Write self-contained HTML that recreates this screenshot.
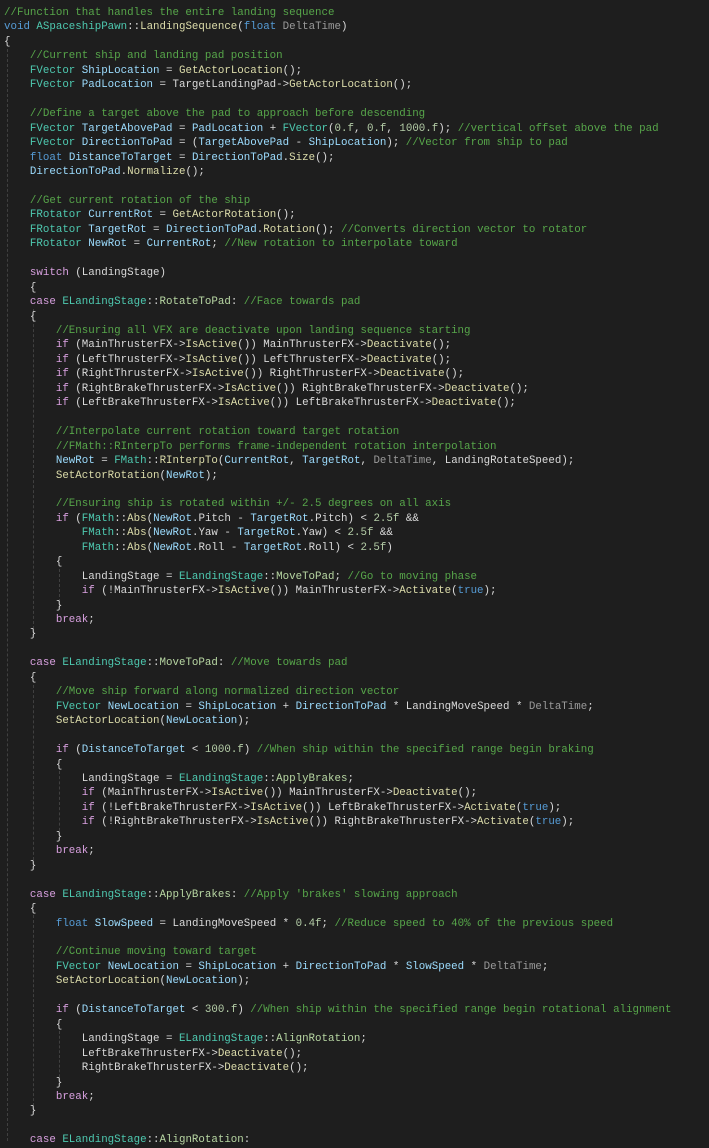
<!DOCTYPE html>
<html><head><meta charset="utf-8"><style>
html,body{margin:0;padding:0;background:#1e1e1e;width:709px;height:1147px;overflow:hidden}
pre{position:absolute;left:4px;top:6px;margin:0;font-family:"Liberation Mono",monospace;font-size:10.8px;line-height:14.45px;color:#dadada;white-space:pre}
.c{color:#57a64a}.k{color:#569cd6}.p{color:#d8a0df}.t{color:#4ec9b0}.f{color:#dcdcaa}.v{color:#9cdcfe}.n{color:#b5cea8}.e{color:#b8d7a3}.g{color:#9a9a9a}.o{color:#b4b4b4}
.guide{position:absolute;width:0;border-left:1px dashed #404040}
</style></head><body>
<div class="guide" style="left:7px;top:49px;height:1092px"></div>
<div class="guide" style="left:33px;top:309px;height:325px"></div>
<div class="guide" style="left:59px;top:569px;height:38px"></div>
<div class="guide" style="left:33px;top:685px;height:180px"></div>
<div class="guide" style="left:59px;top:771px;height:65px"></div>
<div class="guide" style="left:33px;top:915px;height:196px"></div>
<div class="guide" style="left:59px;top:1031px;height:51px"></div>
<pre><span class="c">//Function that handles the entire landing sequence</span>
<span class="k">void</span> <span class="t">ASpaceshipPawn</span>::<span class="f">LandingSequence</span>(<span class="k">float</span> <span class="g">DeltaTime</span>)
{
    <span class="c">//Current ship and landing pad position</span>
    <span class="t">FVector</span> <span class="v">ShipLocation</span> = <span class="f">GetActorLocation</span>();
    <span class="t">FVector</span> <span class="v">PadLocation</span> = TargetLandingPad-&gt;<span class="f">GetActorLocation</span>();

    <span class="c">//Define a target above the pad to approach before descending</span>
    <span class="t">FVector</span> <span class="v">TargetAbovePad</span> = <span class="v">PadLocation</span> + <span class="t">FVector</span>(<span class="n">0.f</span>, <span class="n">0.f</span>, <span class="n">1000.f</span>); <span class="c">//vertical offset above the pad</span>
    <span class="t">FVector</span> <span class="v">DirectionToPad</span> = (<span class="v">TargetAbovePad</span> - <span class="v">ShipLocation</span>); <span class="c">//Vector from ship to pad</span>
    <span class="k">float</span> <span class="v">DistanceToTarget</span> = <span class="v">DirectionToPad</span>.<span class="f">Size</span>();
    <span class="v">DirectionToPad</span>.<span class="f">Normalize</span>();

    <span class="c">//Get current rotation of the ship</span>
    <span class="t">FRotator</span> <span class="v">CurrentRot</span> = <span class="f">GetActorRotation</span>();
    <span class="t">FRotator</span> <span class="v">TargetRot</span> = <span class="v">DirectionToPad</span>.<span class="f">Rotation</span>(); <span class="c">//Converts direction vector to rotator</span>
    <span class="t">FRotator</span> <span class="v">NewRot</span> = <span class="v">CurrentRot</span>; <span class="c">//New rotation to interpolate toward</span>

    <span class="p">switch</span> (LandingStage)
    {
    <span class="p">case</span> <span class="t">ELandingStage</span>::<span class="e">RotateToPad</span>: <span class="c">//Face towards pad</span>
    {
        <span class="c">//Ensuring all VFX are deactivate upon landing sequence starting</span>
        <span class="p">if</span> (MainThrusterFX-&gt;<span class="f">IsActive</span>()) MainThrusterFX-&gt;<span class="f">Deactivate</span>();
        <span class="p">if</span> (LeftThrusterFX-&gt;<span class="f">IsActive</span>()) LeftThrusterFX-&gt;<span class="f">Deactivate</span>();
        <span class="p">if</span> (RightThrusterFX-&gt;<span class="f">IsActive</span>()) RightThrusterFX-&gt;<span class="f">Deactivate</span>();
        <span class="p">if</span> (RightBrakeThrusterFX-&gt;<span class="f">IsActive</span>()) RightBrakeThrusterFX-&gt;<span class="f">Deactivate</span>();
        <span class="p">if</span> (LeftBrakeThrusterFX-&gt;<span class="f">IsActive</span>()) LeftBrakeThrusterFX-&gt;<span class="f">Deactivate</span>();

        <span class="c">//Interpolate current rotation toward target rotation</span>
        <span class="c">//FMath::RInterpTo performs frame-independent rotation interpolation</span>
        <span class="v">NewRot</span> = <span class="t">FMath</span>::<span class="f">RInterpTo</span>(<span class="v">CurrentRot</span>, <span class="v">TargetRot</span>, <span class="g">DeltaTime</span>, LandingRotateSpeed);
        <span class="f">SetActorRotation</span>(<span class="v">NewRot</span>);

        <span class="c">//Ensuring ship is rotated within +/- 2.5 degrees on all axis</span>
        <span class="p">if</span> (<span class="t">FMath</span>::<span class="f">Abs</span>(<span class="v">NewRot</span>.Pitch - <span class="v">TargetRot</span>.Pitch) &lt; <span class="n">2.5f</span> &amp;&amp;
            <span class="t">FMath</span>::<span class="f">Abs</span>(<span class="v">NewRot</span>.Yaw - <span class="v">TargetRot</span>.Yaw) &lt; <span class="n">2.5f</span> &amp;&amp;
            <span class="t">FMath</span>::<span class="f">Abs</span>(<span class="v">NewRot</span>.Roll - <span class="v">TargetRot</span>.Roll) &lt; <span class="n">2.5f</span>)
        {
            LandingStage = <span class="t">ELandingStage</span>::<span class="e">MoveToPad</span>; <span class="c">//Go to moving phase</span>
            <span class="p">if</span> (!MainThrusterFX-&gt;<span class="f">IsActive</span>()) MainThrusterFX-&gt;<span class="f">Activate</span>(<span class="k">true</span>);
        }
        <span class="p">break</span>;
    }

    <span class="p">case</span> <span class="t">ELandingStage</span>::<span class="e">MoveToPad</span>: <span class="c">//Move towards pad</span>
    {
        <span class="c">//Move ship forward along normalized direction vector</span>
        <span class="t">FVector</span> <span class="v">NewLocation</span> = <span class="v">ShipLocation</span> + <span class="v">DirectionToPad</span> * LandingMoveSpeed * <span class="g">DeltaTime</span>;
        <span class="f">SetActorLocation</span>(<span class="v">NewLocation</span>);

        <span class="p">if</span> (<span class="v">DistanceToTarget</span> &lt; <span class="n">1000.f</span>) <span class="c">//When ship within the specified range begin braking</span>
        {
            LandingStage = <span class="t">ELandingStage</span>::<span class="e">ApplyBrakes</span>;
            <span class="p">if</span> (MainThrusterFX-&gt;<span class="f">IsActive</span>()) MainThrusterFX-&gt;<span class="f">Deactivate</span>();
            <span class="p">if</span> (!LeftBrakeThrusterFX-&gt;<span class="f">IsActive</span>()) LeftBrakeThrusterFX-&gt;<span class="f">Activate</span>(<span class="k">true</span>);
            <span class="p">if</span> (!RightBrakeThrusterFX-&gt;<span class="f">IsActive</span>()) RightBrakeThrusterFX-&gt;<span class="f">Activate</span>(<span class="k">true</span>);
        }
        <span class="p">break</span>;
    }

    <span class="p">case</span> <span class="t">ELandingStage</span>::<span class="e">ApplyBrakes</span>: <span class="c">//Apply 'brakes' slowing approach</span>
    {
        <span class="k">float</span> <span class="v">SlowSpeed</span> = LandingMoveSpeed * <span class="n">0.4f</span>; <span class="c">//Reduce speed to 40% of the previous speed</span>

        <span class="c">//Continue moving toward target</span>
        <span class="t">FVector</span> <span class="v">NewLocation</span> = <span class="v">ShipLocation</span> + <span class="v">DirectionToPad</span> * <span class="v">SlowSpeed</span> * <span class="g">DeltaTime</span>;
        <span class="f">SetActorLocation</span>(<span class="v">NewLocation</span>);

        <span class="p">if</span> (<span class="v">DistanceToTarget</span> &lt; <span class="n">300.f</span>) <span class="c">//When ship within the specified range begin rotational alignment</span>
        {
            LandingStage = <span class="t">ELandingStage</span>::<span class="e">AlignRotation</span>;
            LeftBrakeThrusterFX-&gt;<span class="f">Deactivate</span>();
            RightBrakeThrusterFX-&gt;<span class="f">Deactivate</span>();
        }
        <span class="p">break</span>;
    }

    <span class="p">case</span> <span class="t">ELandingStage</span>::<span class="e">AlignRotation</span>:</pre>
</body></html>
